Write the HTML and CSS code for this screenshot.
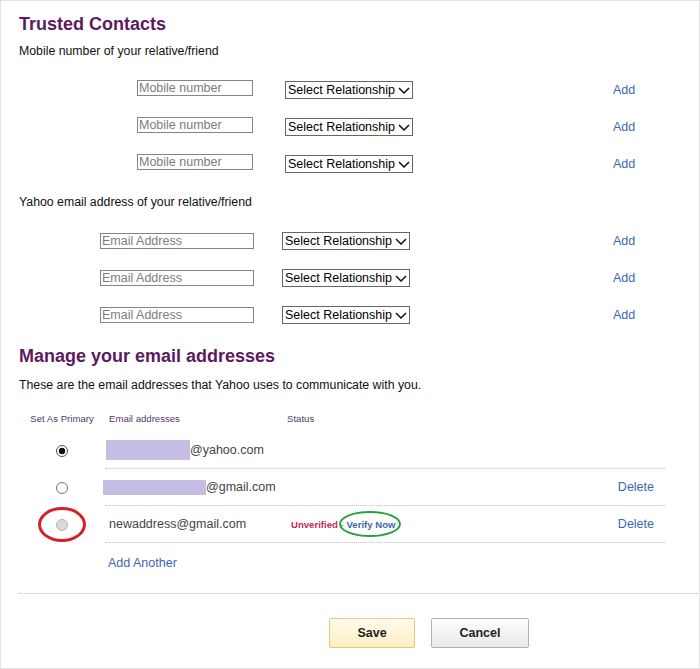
FILE: index.html
```html
<!DOCTYPE html>
<html lang="en">
<head>
    <meta charset="UTF-8">
    <title>Account Info - Trusted Contacts</title>
    <link rel="stylesheet" href="styles.css">
</head>
<body>
    <div class="page">
        <h1 class="section-title">Trusted Contacts</h1>
        <p class="label">Mobile number of your relative/friend</p>
        <div class="contact-list mobile">
            <div class="contact-row">
                <input class="text-input" type="text" placeholder="Mobile number">
                <span class="select-wrap">
                    <select class="rel-select"><option>Select Relationship</option></select>
                    <svg class="chevron" width="12" height="7" viewBox="0 0 12 7"><path d="M1 1l5 5 5-5" fill="none" stroke="#111" stroke-width="1.5"/></svg>
                </span>
                <a class="link add-link" href="#">Add</a>
            </div>
            <div class="contact-row">
                <input class="text-input" type="text" placeholder="Mobile number">
                <span class="select-wrap">
                    <select class="rel-select"><option>Select Relationship</option></select>
                    <svg class="chevron" width="12" height="7" viewBox="0 0 12 7"><path d="M1 1l5 5 5-5" fill="none" stroke="#111" stroke-width="1.5"/></svg>
                </span>
                <a class="link add-link" href="#">Add</a>
            </div>
            <div class="contact-row">
                <input class="text-input" type="text" placeholder="Mobile number">
                <span class="select-wrap">
                    <select class="rel-select"><option>Select Relationship</option></select>
                    <svg class="chevron" width="12" height="7" viewBox="0 0 12 7"><path d="M1 1l5 5 5-5" fill="none" stroke="#111" stroke-width="1.5"/></svg>
                </span>
                <a class="link add-link" href="#">Add</a>
            </div>
        </div>

        <p class="label label-email">Yahoo email address of your relative/friend</p>
        <div class="contact-list email">
            <div class="contact-row">
                <input class="text-input" type="text" placeholder="Email Address">
                <span class="select-wrap">
                    <select class="rel-select"><option>Select Relationship</option></select>
                    <svg class="chevron" width="12" height="7" viewBox="0 0 12 7"><path d="M1 1l5 5 5-5" fill="none" stroke="#111" stroke-width="1.5"/></svg>
                </span>
                <a class="link add-link" href="#">Add</a>
            </div>
            <div class="contact-row">
                <input class="text-input" type="text" placeholder="Email Address">
                <span class="select-wrap">
                    <select class="rel-select"><option>Select Relationship</option></select>
                    <svg class="chevron" width="12" height="7" viewBox="0 0 12 7"><path d="M1 1l5 5 5-5" fill="none" stroke="#111" stroke-width="1.5"/></svg>
                </span>
                <a class="link add-link" href="#">Add</a>
            </div>
            <div class="contact-row">
                <input class="text-input" type="text" placeholder="Email Address">
                <span class="select-wrap">
                    <select class="rel-select"><option>Select Relationship</option></select>
                    <svg class="chevron" width="12" height="7" viewBox="0 0 12 7"><path d="M1 1l5 5 5-5" fill="none" stroke="#111" stroke-width="1.5"/></svg>
                </span>
                <a class="link add-link" href="#">Add</a>
            </div>
        </div>

        <h2 class="section-title manage-title">Manage your email addresses</h2>
        <p class="label intro">These are the email addresses that Yahoo uses to communicate with you.</p>

        <div class="email-table">
            <div class="email-head">
                <span class="col-primary">Set As Primary</span>
                <span class="col-address">Email addresses</span>
                <span class="col-status">Status</span>
            </div>
            <div class="email-row">
                <span class="col-primary"><input class="radio" type="radio" name="primary" checked></span>
                <div class="row-line">
                    <span class="col-address"><span class="redacted r1"></span>@yahoo.com</span>
                    <span class="col-status"></span>
                </div>
            </div>
            <div class="email-row">
                <span class="col-primary"><input class="radio" type="radio" name="primary"></span>
                <div class="row-line">
                    <span class="col-address"><span class="redacted r2"></span>@gmail.com</span>
                    <span class="col-status"></span>
                    <a class="link delete-link" href="#">Delete</a>
                </div>
            </div>
            <div class="email-row">
                <span class="col-primary">
                    <input class="radio" type="radio" name="primary" disabled>
                    <span class="mark-red"></span>
                </span>
                <div class="row-line">
                    <span class="col-address">newaddress@gmail.com</span>
                    <span class="col-status"><span class="unverified">Unverified</span> - <a class="verify-link" href="#">Verify Now</a></span>
                    <a class="link delete-link" href="#">Delete</a>
                </div>
            </div>
            <a class="link add-another" href="#">Add Another</a>
        </div>

        <div class="actions">
            <button class="btn btn-save" type="button">Save</button>
            <button class="btn btn-cancel" type="button">Cancel</button>
        </div>
    </div>
</body>
</html>
```

FILE: styles.css
```css
/* page frame */
body {
    margin: 0;
    font-family: "Liberation Sans", Arial, sans-serif;
    background: #fff;
    color: #222;
}

.page {
    width: 700px;
    height: 669px;
    box-sizing: border-box;
    border: 1px solid #e4e4e4;
    padding: 0 0 0 18px;
    overflow: hidden;
}

/* headings and labels */
.section-title {
    margin: 12px 0 0;
    font-size: 18px;
    line-height: 22px;
    font-weight: bold;
    color: #5c1a5e;
}

.manage-title {
    margin-top: 12px;
}

.label {
    margin: 8px 0 0;
    font-size: 12.3px;
    line-height: 16px;
    color: #111;
}

.label-email {
    margin-top: 12px;
}

.intro {
    margin-top: 10px;
}

.link {
    color: #3b68b1;
    text-decoration: none;
    font-size: 12.5px;
}

/* trusted contacts rows */
.contact-list {
    margin-top: 12px;
}

.contact-list.email {
    margin-top: 12px;
}

.contact-row {
    display: flex;
    align-items: center;
    height: 37px;
}

.mobile .contact-row {
    padding-left: 118px;
}

.email .contact-row {
    padding-left: 81px;
}

.text-input {
    box-sizing: border-box;
    height: 16px;
    margin: 0;
    padding: 0 1px;
    border: 1px solid #858585;
    border-radius: 0;
    font-family: inherit;
    font-size: 12.5px;
    outline: none;
}

.text-input::placeholder {
    color: #7d7d7d;
}

.mobile .text-input {
    width: 116px;
    margin-bottom: 3px;
}

.email .text-input {
    width: 154px;
}

.select-wrap {
    position: relative;
    display: inline-flex;
}

.mobile .select-wrap {
    margin-left: 32px;
}

.email .select-wrap {
    margin-left: 28px;
}

.rel-select {
    appearance: none;
    -webkit-appearance: none;
    box-sizing: border-box;
    width: 128px;
    height: 18px;
    margin: 0;
    padding: 0 0 0 2px;
    border: 1px solid #666;
    border-radius: 0;
    background: #fff;
    color: #000;
    font-family: inherit;
    font-size: 12.5px;
    line-height: 16px;
}

.chevron {
    position: absolute;
    right: 3px;
    top: 6px;
    pointer-events: none;
}

.mobile .add-link {
    margin-left: 200px;
}

.email .add-link {
    margin-left: 203px;
}

/* email address table */
.email-table {
    margin-top: 19px;
}

.email-head {
    display: flex;
    font-size: 9.6px;
    line-height: 14px;
    color: #553a66;
}

.col-primary {
    position: relative;
    width: 86px;
    flex-shrink: 0;
    display: flex;
    justify-content: center;
    align-items: center;
}

.col-address {
    width: 182px;
    box-sizing: border-box;
    padding-left: 4px;
    flex-shrink: 0;
}

.email-row {
    display: flex;
    height: 37px;
}

.email-head + .email-row {
    margin-top: 6px;
}

.row-line {
    width: 560px;
    display: flex;
    align-items: center;
    border-bottom: 1px dotted #c4c4c4;
    font-size: 12.5px;
    color: #444;
}

.row-line .col-address {
    display: flex;
    align-items: center;
    padding-left: 4px;
}

.row-line .col-status {
    flex: 1;
    padding-left: 4px;
    font-size: 9.6px;
    color: #777;
}

.redacted {
    display: inline-block;
    background: #c5bde3;
}

.redacted.r1 {
    width: 84px;
    height: 20px;
    margin-left: -3px;
}

.redacted.r2 {
    width: 103px;
    height: 15px;
    margin-left: -6px;
}

.unverified {
    color: #c62a55;
    font-weight: bold;
}

.verify-link {
    position: relative;
    color: #3b68b1;
    font-weight: bold;
    text-decoration: none;
}

/* annotation ellipses */
.verify-link::after {
    content: "";
    position: absolute;
    top: -8px;
    bottom: -7px;
    left: -7px;
    right: -5px;
    border: 2px solid #27a23b;
    border-radius: 50%;
}

.mark-red {
    position: absolute;
    left: 19px;
    top: 1px;
    width: 48px;
    height: 35px;
    box-sizing: border-box;
    border: 3px solid #d5202c;
    border-radius: 50%;
}

.delete-link {
    margin-right: 11px;
}

.radio {
    appearance: none;
    -webkit-appearance: none;
    width: 12px;
    height: 12px;
    margin: 0;
    border: 1px solid #7a7a7a;
    border-radius: 50%;
    background: #fff;
}

.radio:checked {
    border-color: #555;
    background: radial-gradient(circle, #111 0 3px, #fff 3.6px);
}

.radio:disabled {
    border-color: #b4b4b4;
    background: #dadada;
}

.add-another {
    display: block;
    margin: 12px 0 0 89px;
    line-height: 16px;
}

/* footer buttons */
.actions {
    margin-top: 22px;
    border-top: 1px dotted #c4c4c4;
    padding: 24px 0 0 310px;
    display: flex;
    gap: 16px;
}

.btn {
    height: 30px;
    border-radius: 2px;
    font-family: inherit;
    font-size: 12.5px;
    font-weight: bold;
    color: #222;
    cursor: pointer;
}

.btn-save {
    width: 86px;
    border: 1px solid #e6c877;
    background: linear-gradient(#fffbee, #fdefc4);
}

.btn-cancel {
    width: 98px;
    border: 1px solid #b3b3b3;
    background: linear-gradient(#fdfdfd, #e9e9e9);
}
```
